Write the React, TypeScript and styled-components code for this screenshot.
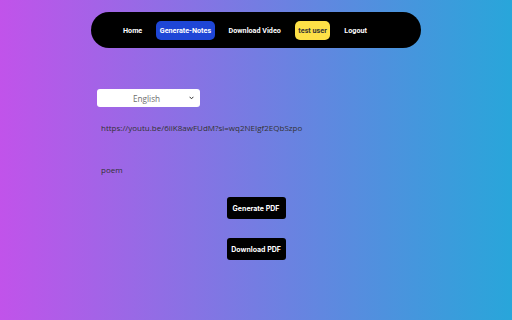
import styled, { createGlobalStyle } from "styled-components";

const GlobalStyle = createGlobalStyle`
  html, body {
    margin: 0;
    padding: 0;
    height: 100%;
  }
  body {
    font-family: "Open Sans", "Noto Sans", sans-serif;
    background: linear-gradient(to right, #c153ea, #28a6da);
    min-height: 320px;
  }
`;

const Page = styled.div`
  width: 512px;
  height: 320px;
  padding-top: 12px;
  box-sizing: border-box;
`;

const Nav = styled.nav`
  width: 330px;
  height: 36px;
  margin: 0 auto;
  padding-left: 32px;
  box-sizing: border-box;
  background: #000;
  border-radius: 18px;
  display: flex;
  align-items: center;
  gap: 14px;
`;

const NavItem = styled.a<{ $bg?: string; $color?: string }>`
  font-family: Roboto, "Noto Sans", sans-serif;
  font-size: 7.2px;
  font-weight: 700;
  color: ${(p) => p.$color || "#fff"};
  background: ${(p) => p.$bg || "transparent"};
  padding: 0 ${(p) => (p.$bg ? "3.5px" : "0")};
  line-height: 9px;
  border-radius: 5px;
  height: 19px;
  box-sizing: border-box;
  display: flex;
  align-items: center;
`;

const Main = styled.main`
  width: 318px;
  margin: 41px auto 0;
  display: flex;
  flex-direction: column;
`;

const SelectWrap = styled.div`
  position: relative;
  width: 103px;
  height: 18px;
`;

const Select = styled.select`
  display: block;
  appearance: none;
  width: 100%;
  height: 100%;
  margin: 0;
  border: none;
  border-radius: 3px;
  background: #fff;
  color: #6e6e6e;
  font-family: "Open Sans", sans-serif;
  font-size: 8.2px;
  text-align: left;
  padding: 0 0 0 36px;
  outline: none;
`;

const Chevron = styled.svg`
  position: absolute;
  right: 6px;
  top: 7px;
  width: 5px;
  height: 4px;
  pointer-events: none;
`;

const Text = styled.p<{ $mt: number }>`
  margin: ${(p) => p.$mt}px 0 0 4px;
  font-size: 8px;
  line-height: 12px;
  color: #333;
`;

const Actions = styled.div`
  display: flex;
  flex-direction: column;
  align-items: center;
  gap: 19px;
  margin-top: 21px;
`;

const Button = styled.button`
  width: 59px;
  height: 22px;
  border: none;
  border-radius: 3px;
  background: #000;
  color: #fff;
  font-family: Inter, "Noto Sans", sans-serif;
  font-size: 7px;
  font-weight: 700;
  padding: 0;
`;

export default function App() {
  return (
    <>
      <GlobalStyle />
      <Page>
        <Nav>
          <NavItem>Home</NavItem>
          <NavItem $bg="#1e46d6">Generate-Notes</NavItem>
          <NavItem>Download Video</NavItem>
          <NavItem $bg="#fde047" $color="#333">test user</NavItem>
          <NavItem>Logout</NavItem>
        </Nav>
        <Main>
          <SelectWrap>
            <Select defaultValue="English">
              <option>English</option>
              <option>Hindi</option>
            </Select>
            <Chevron viewBox="0 0 5 4">
              <path d="M0.6 0.8 L2.5 2.8 L4.4 0.8" fill="none" stroke="#333" strokeWidth="1" />
            </Chevron>
          </SelectWrap>
          <Text $mt={15}>https://youtu.be/6iiK8awFUdM?si=wq2NEIgf2EQbSzpo</Text>
          <Text $mt={30}>poem</Text>
          <Actions>
            <Button>Generate PDF</Button>
            <Button>Download PDF</Button>
          </Actions>
        </Main>
      </Page>
    </>
  );
}
